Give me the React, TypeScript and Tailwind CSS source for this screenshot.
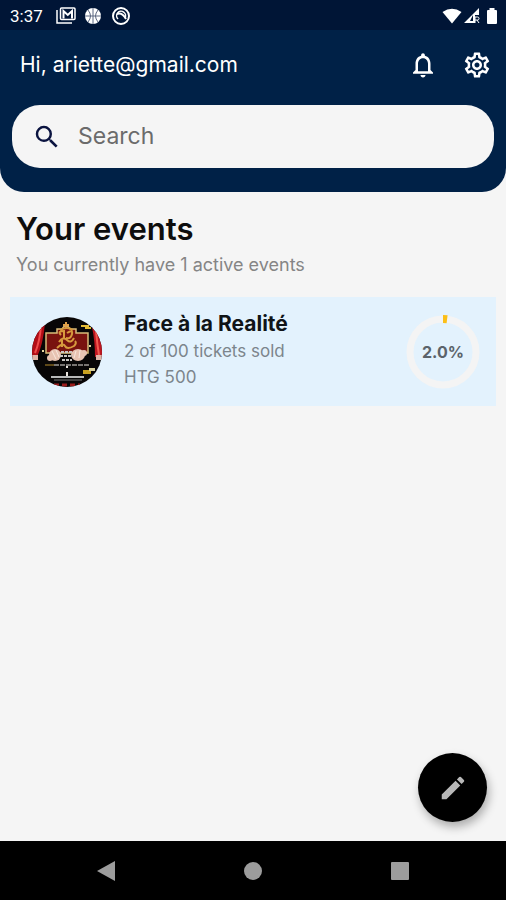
import { MdModeEdit, MdNotificationsNone, MdOutlineSettings, MdSearch } from "react-icons/md"

const user = { email: "ariette@gmail.com" }

const events = [
  { id: 1, name: "Face à la Realité", sold: 2, total: 100, price: "HTG 500" },
]

function StatusBar() {
  return (
    <div className="flex h-[30px] items-center justify-between bg-[#001536] pl-[10px] pr-2 pt-px text-white">
      <div className="flex items-center">
        <span className="mr-[13px] font-[Roboto] text-[17px] leading-5">3:37</span>
        {/* Mail */}
        <svg className="mr-2 h-5 w-5" viewBox="0 0 20 20" fill="none" stroke="currentColor">
          <path d="M1 4v13h15" strokeWidth="1.5" />
          <rect x="4.5" y="2" width="14.5" height="11.5" rx="1" strokeWidth="1.5" />
          <path d="M7.5 12.500V5l4.250 4L16 5v7.500" strokeWidth="2" />
        </svg>
        {/* Ball */}
        <svg className="mr-2 h-5 w-5" viewBox="0 0 20 20">
          <circle cx="9" cy="10" r="8" fill="currentColor" />
          <path d="M9 2v16M1 10h16M4 4q5 6 0 12M14 4q-5 6 0 12" fill="none" stroke="#5b6680" />
        </svg>
        {/* Radar */}
        <svg className="h-5 w-5" viewBox="0 0 20 20" fill="none" stroke="currentColor">
          <circle cx="9" cy="10" r="8" strokeWidth="2" />
          <path d="M5 8q5-2 9 5" strokeWidth="2" />
          <path d="M6 13a4.5 4.5 0 1 1 7-1" strokeWidth="1.5" />
        </svg>
      </div>
      <div className="flex items-center">
        <svg className="h-5 w-5" viewBox="0 0 20 20" fill="currentColor">
          <path d="M.5 6Q10-.5 19.5 6L10 17.5Z" />
        </svg>
        <svg className="mr-1 h-5 w-5" viewBox="0 0 20 20">
          <path d="M2 17 17 2v7h-4v8Z" fill="currentColor" />
          <path d="M8 15h3V9Z" fill="#001536" />
          <path d="M13 17v-6h2.5a1.5 1.5 0 0 1 0 3H13m2 0 2 3" fill="none" stroke="currentColor" />
        </svg>
        <svg className="h-5 w-3" viewBox="0 0 12 20" fill="currentColor">
          <path d="M3.5 2h5v2H10q1 0 1 1v12q0 1-1 1H2q-1 0-1-1V5q0-1 1-1h1.5Z" />
        </svg>
      </div>
    </div>
  )
}

function Poster() {
  return (
    <svg className="h-[70px] w-[70px] shrink-0" viewBox="0 0 70 70" role="img" aria-label="Event poster">
      <clipPath id="poster">
        <circle cx="35" cy="35" r="35" />
      </clipPath>
      <g clipPath="url(#poster)">
        <rect width="70" height="70" fill="#080606" />
        {/* Curtains */}
        <path d="M0 6h13Q11 28 5 40H0Z" fill="#b20d16" />
        <path d="M9 8Q8 24 3 36" fill="none" stroke="#ef4a4a" strokeWidth="2" />
        <path d="M60 10h10v30h-7Q63 24 60 10Z" fill="#c01620" />
        <path d="M64 14q1 12 3 24" fill="none" stroke="#f05a50" strokeWidth="2" />
        <path d="M0 38h6v5H0zM64 38h6v5h-6z" fill="#dfb4a7" />
        {/* Crest */}
        <path
          d="M14 36V16h11v-4h5l4-5 4 5h6v4h12v20Z"
          fill="#79130f"
          stroke="#d9bd7a"
          strokeWidth="1.5"
        />
        <path d="M34 5v6M31 8h6" stroke="#e2a24a" strokeWidth="2" />
        <g fill="none" stroke="#d79b3e" strokeWidth="2">
          <path d="M28 13q7-4 13 0M29 18q-4-4 3-4v7m3-5q6-4 5 1t-6 4" />
          <path d="M27 25q4-6 8-2t7-2M25 31q6-6 8-2t9 0q3-3 1-5M30 23v7" />
        </g>
        {/* Hands */}
        <g fill="#e7c3b2">
          <ellipse cx="23" cy="38" rx="6" ry="6" />
          <ellipse cx="46" cy="38" rx="7" ry="6" />
          <circle cx="18" cy="41" r="3" />
          <circle cx="52" cy="36" r="3" />
        </g>
        <path d="m20 34 4 8M24 33l3 7M44 34l-2 7M48 33l-1 8" stroke="#f7e6dc" />
        <path d="M29 35h11M28 39h13M30 43h10" stroke="#c9c5c2" strokeWidth="2" strokeDasharray="3 1" />
        <path d="M13 48h9" stroke="#b58b2a" />
        <path d="M22 48h35" stroke="#e9e3dd" strokeDasharray="5 1" />
        <path d="M35 49v2M35 55v4" stroke="#e9e3dd" strokeWidth="2" />
        <path d="M19 60h33" stroke="#b9b9b9" strokeWidth="2" />
        <path d="M22 63h28" stroke="#777" />
        <path d="M51 53h8v4h-8z" fill="#c8a020" />
        <path d="M57 51h6v3h-6z" fill="#d8cf9b" />
        <path d="M49 9h8M53 11h6" stroke="#e5bb35" strokeWidth="2" />
        <path d="M10 34h2M57 29h2" stroke="#e8d8a0" strokeWidth="2" />
        <path d="M22 68h26" stroke="#9c1c1c" strokeWidth="3" strokeDasharray="5 3" />
      </g>
    </svg>
  )
}

function SoldRing({ percent }: { percent: number }) {
  return (
    <div className="grid h-[74px] w-[74px] shrink-0 place-items-center">
      <svg className="col-start-1 row-start-1 h-full w-full" viewBox="0 0 74 74" fill="none">
        <circle cx="37" cy="37" r="33" stroke="#f4f4f4" strokeWidth="7" />
        <circle
          cx="37"
          cy="37"
          r="33"
          stroke="#fbbf17"
          strokeWidth="8"
          pathLength="100"
          strokeDasharray={`${percent} 100`}
          transform="rotate(-90 37 37)"
        />
      </svg>
      <span className="col-start-1 row-start-1 text-base font-bold text-[#5b636a]">{percent.toFixed(1)}%</span>
    </div>
  )
}

export default function App() {
  return (
    <div className="flex min-h-screen flex-col bg-[#f5f5f5] font-[Inter,sans-serif]">
      {/* Header */}
      <header className="overflow-hidden rounded-b-3xl bg-[#002147]">
        <StatusBar />
        <div className="flex h-[75px] items-center justify-between pb-[6px] pl-5 pr-[14px] text-white">
          <p className="text-[21px]">Hi, {user.email}</p>
          <div className="flex gap-6">
            <button type="button" aria-label="Notifications">
              <MdNotificationsNone className="h-[30px] w-[30px]" />
            </button>
            <button type="button" aria-label="Settings">
              <MdOutlineSettings className="h-[30px] w-[30px]" />
            </button>
          </div>
        </div>
        <label className="mx-3 mb-6 flex h-[63px] items-center gap-4 rounded-[28px] bg-[#f5f5f5] px-5">
          <MdSearch className="h-[30px] w-[30px] shrink-0 text-[#0b1440]" />
          <input
            type="search"
            aria-label="Search"
            placeholder="Search"
            className="min-w-0 flex-1 bg-transparent text-[23px] outline-none placeholder:text-[#6b6b6b]"
          />
        </label>
      </header>

      {/* Events */}
      <main className="relative flex-1 px-[10px] pt-[19px]">
        <h1 className="pl-[6px] text-[31px] font-semibold leading-9 text-[#0d0d0d]">Your events</h1>
        <p className="pl-[6px] pt-[6px] text-lg leading-6 text-[#858585]">
          You currently have {events.length} active events
        </p>
        <ul className="mt-5">
          {events.map((event) => (
            <li key={event.id} className="flex h-[109px] items-center bg-[#e3f2fd] pl-[22px] pr-4">
              <Poster />
              <div className="ml-[22px] flex-1 pb-1">
                <h2 className="text-[21px] font-bold leading-7 text-[#101418]">{event.name}</h2>
                <p className="text-[17px] leading-[26px] text-[#7c858c]">
                  {event.sold} of {event.total} tickets sold
                </p>
                <p className="text-[17px] leading-[26px] text-[#7c858c]">{event.price}</p>
              </div>
              <SoldRing percent={(event.sold / event.total) * 100} />
            </li>
          ))}
        </ul>
        <button
          type="button"
          aria-label="Create event"
          className="absolute bottom-[19px] right-[19px] flex h-[69px] w-[69px] items-center justify-center rounded-full bg-black text-[#b8b8b8] shadow-[2px_5px_10px_rgba(0,0,0,0.3)]"
        >
          <MdModeEdit className="h-[30px] w-[30px]" />
        </button>
      </main>

      {/* Navigation bar */}
      <nav className="flex h-[59px] items-center justify-between bg-black px-24 text-[#9c9c9c]">
        <button type="button" aria-label="Back">
          <svg className="h-5 w-5" viewBox="0 0 20 20" fill="currentColor">
            <path d="M1 10 19 0v20Z" />
          </svg>
        </button>
        <button type="button" aria-label="Home">
          <svg className="h-5 w-5" viewBox="0 0 20 20" fill="currentColor">
            <circle cx="10" cy="10" r="9" />
          </svg>
        </button>
        <button type="button" aria-label="Recent apps">
          <svg className="h-5 w-5" viewBox="0 0 20 20" fill="currentColor">
            <rect x="1" y="1" width="18" height="18" rx="1" />
          </svg>
        </button>
      </nav>
    </div>
  )
}
